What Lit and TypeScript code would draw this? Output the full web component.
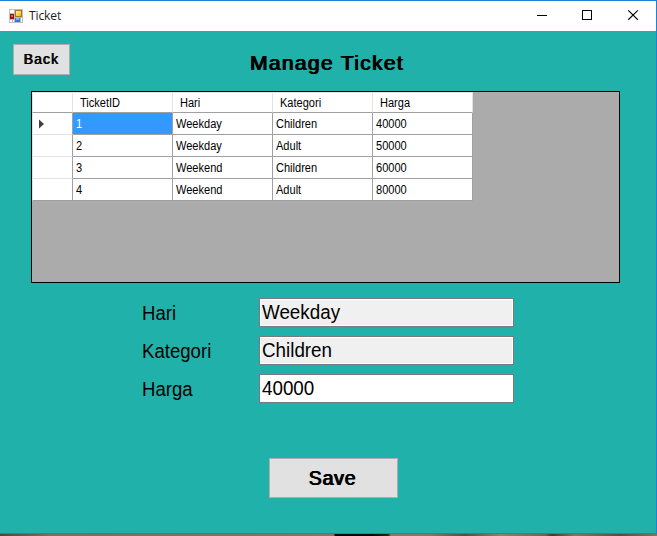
import { LitElement, html, svg, css } from "lit";
import { customElement, property, state } from "lit/decorators.js";
import { classMap } from "lit/directives/class-map.js";

interface Ticket {
  id: number;
  hari: string;
  kategori: string;
  harga: number;
}

@customElement("title-bar")
class TitleBar extends LitElement {
  @property() caption = "";

  static styles = css`
    :host {
      display: flex;
      align-items: center;
      height: 30px;
      background: #fff;
      padding-left: 9px;
      font: 12px "Open Sans", "Noto Sans", sans-serif;
      color: #1b1b1b;
    }
    .caption {
      flex: 1;
      margin-left: 6px;
      line-height: 30px;
      letter-spacing: -0.1px;
    }
    .controls {
      display: flex;
    }
    .control {
      display: block;
      width: 45.5px;
      height: 30px;
    }
    svg {
      display: block;
    }
  `;

  render() {
    return html`
      <svg width="14" height="14" viewBox="0 0 14 14" shape-rendering="crispEdges">
        <defs>
          <linearGradient id="y" x1="0" y1="0" x2="1" y2="1">
            <stop offset="0" stop-color="#fff3a0" />
            <stop offset="1" stop-color="#f2b400" />
          </linearGradient>
        </defs>
        <rect width="14" height="14" fill="#bdbdbd" />
        <rect x="1" y="1" width="4" height="3" fill="#fff" />
        <rect x="1" y="11" width="2" height="2" fill="#fff" />
        <rect x="4" y="11" width="1" height="2" fill="#fff" />
        <rect x="12" y="9" width="1" height="4" fill="#fff" />
        <rect x="1" y="5" width="4" height="5" fill="#9b1010" />
        <rect x="2" y="6" width="2" height="2" fill="#e8605a" />
        <rect x="6" y="1" width="7" height="7" fill="#a57a10" />
        <rect x="7" y="2" width="5" height="5" fill="url(#y)" />
        <rect x="6" y="9" width="5" height="4" fill="#3f74d0" />
        <rect x="7" y="9" width="3" height="2" fill="#86b4f5" />
      </svg>
      <span class="caption">${this.caption}</span>
      <div class="controls">
        <svg class="control" viewBox="0 0 46 30" width="46" height="30">
          <path d="M17.5 14.5h10" stroke="#000" shape-rendering="crispEdges" />
        </svg>
        <svg class="control" viewBox="0 0 46 30" width="46" height="30">
          <rect x="17.5" y="9.5" width="9" height="9" fill="none" stroke="#000" shape-rendering="crispEdges" />
        </svg>
        <svg class="control" viewBox="0 0 46 30" width="46" height="30">
          <path d="M17.5 9.2l9.6 9.6M27.1 9.2l-9.6 9.6" stroke="#000" stroke-width="1.1" />
        </svg>
      </div>
    `;
  }
}

@customElement("ticket-grid")
class TicketGrid extends LitElement {
  @property({ attribute: false }) rows: Ticket[] = [];
  @property({ type: Number }) selected = 0;

  static styles = css`
    :host {
      display: block;
      box-sizing: border-box;
      border: 1px solid #000;
      background: #ababab;
      font: 12px "Liberation Sans", Arial, sans-serif;
      color: #000;
    }
    .table {
      display: grid;
      grid-template-columns: 41px repeat(4, 100px);
      grid-template-rows: 21px repeat(4, 22px);
      width: 441px;
    }
    .cell {
      display: flex;
      align-items: center;
      box-sizing: border-box;
      background: #fff;
      border-right: 1px solid #a0a0a0;
      border-bottom: 1px solid #a0a0a0;
      padding-left: 3px;
    }
    .head {
      padding-left: 7px;
      border-right-color: #e3e3e3;
      border-top: 1px solid #e3e3e3;
    }
    .stub {
      border-left: 1px solid #e3e3e3;
      border-bottom-color: #e3e3e3;
      padding-left: 6px;
    }
    .corner {
      border-bottom-color: #a0a0a0;
    }
    .last {
      border-bottom-color: #a0a0a0;
    }
    .picked {
      background: #3399ff;
      color: #fff;
    }
    .text {
      display: inline-block;
      line-height: 14px;
      transform: scaleX(0.92);
      transform-origin: 0 50%;
    }
  `;

  render() {
    return html`
      <div class="table">
        <div class="cell head stub corner"></div>
        ${["TicketID", "Hari", "Kategori", "Harga"].map(
          (name) => html`<div class="cell head"><span class="text">${name}</span></div>`
        )}
        ${this.rows.map((row, i) => {
          const current = i === this.selected;
          return html`
            <div class=${classMap({ cell: true, stub: true, last: i === this.rows.length - 1 })}>
              ${current
                ? html`<svg width="5" height="10" viewBox="0 0 5 10">${svg`<path d="M0 0.5L5 5L0 9.5z" fill="#404040"/>`}</svg>`
                : ""}
            </div>
            ${[row.id, row.hari, row.kategori, row.harga].map(
              (value, c) => html`<div class=${classMap({ cell: true, picked: current && c === 0 })}>
                <span class="text">${value}</span>
              </div>`
            )}
          `;
        })}
      </div>
    `;
  }
}

@customElement("form-field")
class FormField extends LitElement {
  @property() label = "";
  @property() value = "";
  @property({ type: Boolean }) locked = false;

  static styles = css`
    :host {
      display: grid;
      grid-template-columns: 117px 255px;
      grid-template-rows: 29px;
      height: 29px;
      font: 20px "Liberation Sans", Arial, sans-serif;
      color: #000;
    }
    .label {
      line-height: 31px;
      transform: scaleX(0.93);
      transform-origin: 0 50%;
    }
    .box {
      box-sizing: border-box;
      height: 29px;
      border: 1px solid #7a7a7a;
      background: #fff;
      padding: 1px;
    }
    .value {
      height: 25px;
      line-height: 25px;
      padding-left: 1px;
    }
    .locked {
      background: #f0f0f0;
    }
    .text {
      display: inline-block;
      transform: scaleX(0.94);
      transform-origin: 0 50%;
    }
  `;

  render() {
    return html`
      <span class="label">${this.label}</span>
      <div class="box">
        <div class=${classMap({ value: true, locked: this.locked })}>
          <span class="text">${this.value}</span>
        </div>
      </div>
    `;
  }
}

@customElement("app-root")
class AppRoot extends LitElement {
  @state() private tickets: Ticket[] = [
    { id: 1, hari: "Weekday", kategori: "Children", harga: 40000 },
    { id: 2, hari: "Weekday", kategori: "Adult", harga: 50000 },
    { id: 3, hari: "Weekend", kategori: "Children", harga: 60000 },
    { id: 4, hari: "Weekend", kategori: "Adult", harga: 80000 },
  ];
  @state() private selected = 0;

  static styles = css`
    :host {
      display: flex;
      flex-direction: column;
      height: 536px;
      overflow: hidden;
      font-family: "Liberation Sans", Arial, sans-serif;
      color: #000;
    }
    .window {
      display: flex;
      flex-direction: column;
      box-sizing: border-box;
      height: 534px;
      border: 1px solid #1883d7;
      border-left: 0;
      background: #20b2aa;
    }
    .top {
      display: grid;
      grid-template-columns: 57px 1fr 57px;
      height: 60px;
      padding: 0 16px 0 13px;
    }
    .button {
      display: flex;
      align-items: center;
      justify-content: center;
      box-sizing: border-box;
      margin: 0;
      padding: 0;
      border: 1px solid #adadad;
      background: #e1e1e1;
      color: #000;
      font-family: inherit;
      font-weight: normal;
      text-shadow: 0.9px 0 #000;
    }
    .back {
      margin-top: 13px;
      padding: 0 1px 2px 0;
      width: 57px;
      height: 31px;
      font-size: 14px;
      letter-spacing: 1.1px;
    }
    .title {
      margin: 19px 0 0;
      text-align: center;
      font-size: 21px;
      font-weight: normal;
      line-height: 26px;
      letter-spacing: 1.35px;
      text-shadow: 0.6px 0 #000, 1.2px 0 #000;
    }
    .grid {
      width: 589px;
      height: 192px;
      margin-left: 31px;
    }
    .form {
      display: flex;
      flex-direction: column;
      gap: 9px;
      margin: 15px 0 0 141px;
    }
    .form form-field {
      margin-left: 1px;
    }
    .save {
      width: 129px;
      height: 40px;
      margin: 55px 0 0 269px;
      padding-right: 3px;
      font-size: 19.5px;
      letter-spacing: 0.8px;
      text-shadow: 0.6px 0 #000, 1.2px 0 #000;
    }
    .desktop {
      height: 2px;
      background: linear-gradient(
        90deg,
        #4f4642 0,
        #7d6c62 50px,
        #85746a 334px,
        #0b0710 335px,
        #0b0710 372px,
        #1c2a18 388px,
        #8c786c 391px,
        #82786c 430px,
        #544d46 465px,
        #8b8072 500px,
        #6e6459 545px,
        #3e3b38 552px,
        #807568 575px,
        #554e47 620px,
        #7c7468 657px
      );
    }
  `;

  render() {
    const ticket = this.tickets[this.selected];
    return html`
      <div class="window">
        <title-bar caption="Ticket"></title-bar>
        <div class="top">
          <button class="button back">Back</button>
          <h1 class="title">Manage Ticket</h1>
        </div>
        <ticket-grid class="grid" .rows=${this.tickets} .selected=${this.selected}></ticket-grid>
        <div class="form">
          <form-field label="Hari" value=${ticket.hari} locked></form-field>
          <form-field label="Kategori" value=${ticket.kategori} locked></form-field>
          <form-field label="Harga" value=${ticket.harga}></form-field>
        </div>
        <button class="button save">Save</button>
      </div>
      <div class="desktop"></div>
    `;
  }
}
